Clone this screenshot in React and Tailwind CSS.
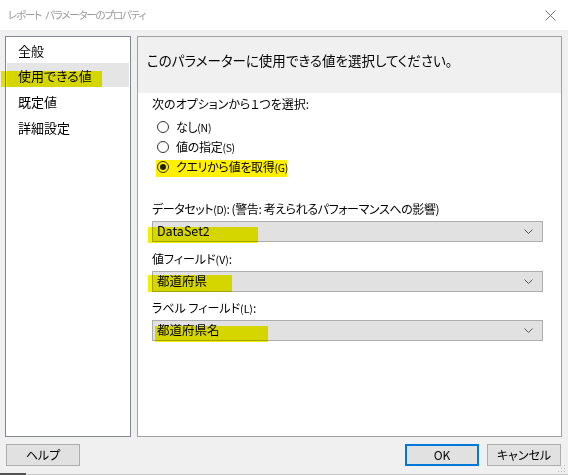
import React from "react";

function Chevron() {
  return (
    <svg width="9" height="5" viewBox="0 0 9 5" className="shrink-0">
      <path d="M0.5 0.5 L4.5 4.5 L8.5 0.5" fill="none" stroke="#555" strokeWidth="1" />
    </svg>
  );
}

function Combo({ value }) {
  return (
    <div className="h-[21px] border border-[#adadad] bg-[#e1e1e1] flex items-center justify-between pl-[4px] pr-[9px] text-[12.5px] text-black leading-none">
      <span>{value}</span>
      <Chevron />
    </div>
  );
}

function Radio({ checked, label, key2 }) {
  return (
    <div className="h-[20px] flex items-center text-[12px] text-black leading-none">
      <div className="w-[12px] h-[12px] ml-[5px] rounded-full border border-[#333] bg-white flex items-center justify-center">
        {checked && <div className="w-[6px] h-[6px] rounded-full bg-[#222]" />}
      </div>
      <span className="ml-[7px] tracking-[-0.3px]">
        {label}
        <span className="text-[10.5px]">({key2})</span>
      </span>
    </div>
  );
}

function Label({ children }) {
  return <div className="h-[20px] flex items-center text-[12px] text-black leading-none">{children}</div>;
}

export default function App() {
  return (
    <div className="relative w-[568px] h-[475px] bg-[#f0f0f0] overflow-hidden font-['Noto_Sans_CJK_JP','Noto_Sans',sans-serif] [font-feature-settings:'palt']">
      {/* title bar */}
      <div className="h-[30px] bg-white flex items-center justify-between pl-[8px] pr-[12px]">
        <span className="flex gap-[4px] text-[10.5px] tracking-[-1.2px] text-[#9a9a9a] leading-none">
          <span>レポート</span>
          <span>パラメーターのプロパティ</span>
        </span>
        <svg width="11" height="11" viewBox="0 0 11 11">
          <path d="M0.5 0.5 L10.5 10.5 M10.5 0.5 L0.5 10.5" stroke="#777" strokeWidth="1" fill="none" />
        </svg>
      </div>

      {/* body */}
      <div className="flex gap-[6px] pl-[5px] pr-[6px] pt-[6px]">
        <div className="w-[126px] h-[401px] border border-[#828790] bg-white flex flex-col text-[13px] text-black leading-none">
          <div className="h-[26px] flex items-center pl-[12px]">全般</div>
          <div className="h-[24px] mx-[1px] bg-[#e5e5e5] flex items-center pl-[11px]">使用できる値</div>
          <div className="h-[28px] flex items-center pl-[12px]">既定値</div>
          <div className="h-[24px] flex items-center pl-[12px]">詳細設定</div>
        </div>

        <div className="flex-1 h-[401px] border border-[#a0a0a0] bg-white flex flex-col">
          <div className="h-[56px] bg-[#f0f0f0] flex items-center pl-[9px] pb-[8px] text-[13.5px] text-black leading-none">
            このパラメーターに使用できる値を選択してください。
          </div>
          <div className="flex flex-col pl-[14px] pr-[18px] pt-[1px]">
            <Label>次のオプションから１つを選択:</Label>
            <div className="mt-[3px] flex flex-col">
              <Radio label="なし" key2="N" />
              <Radio label="値の指定" key2="S" />
              <Radio checked label="クエリから値を取得" key2="G" />
            </div>
            <div className="mt-[22px]">
              <Label>
                <span className="tracking-[-0.4px]">
                  データセット<span className="text-[10.5px]">(D)</span>: (警告: 考えられるパフォーマンスへの影響)
                </span>
              </Label>
            </div>
            <div className="mt-[2px]">
              <Combo value="DataSet2" />
            </div>
            <div className="mt-[7px]">
              <Label>
                <span>
                  値フィールド<span className="text-[10.5px]">(V)</span>:
                </span>
              </Label>
            </div>
            <div className="mt-[2px]">
              <Combo value="都道府県" />
            </div>
            <div className="mt-[6px]">
              <Label>
                <span>
                  ラベル フィールド<span className="text-[10.5px]">(L)</span>:
                </span>
              </Label>
            </div>
            <div className="mt-[2px]">
              <Combo value="都道府県名" />
            </div>
          </div>
        </div>
      </div>

      {/* buttons */}
      <div className="flex items-center justify-between pl-[6px] pr-[7px] mt-[7px]">
        <button className="w-[74px] h-[22px] border border-[#adadad] bg-[#e1e1e1] text-[12px] text-black leading-none">
          ヘルプ
        </button>
        <div className="flex gap-[8px]">
          <button className="w-[74px] h-[22px] border-2 border-[#0078d7] bg-[#e1e1e1] text-[12px] text-black leading-none">
            OK
          </button>
          <button className="w-[74px] h-[22px] border border-[#adadad] bg-[#e1e1e1] text-[12px] text-black leading-none">
            キャンセル
          </button>
        </div>
      </div>

      {/* bottom edge */}
      <div className="absolute left-0 right-0 bottom-0 h-[1px] bg-[#c8c8c8]" />
      <div className="absolute left-0 bottom-0 w-[26px] h-[2px] bg-[#555]" />
      <svg className="absolute right-[2px] bottom-[2px]" width="8" height="8" viewBox="0 0 8 8">
        <rect x="6" y="0" width="1" height="1" fill="#bbb" />
        <rect x="3" y="3" width="1" height="1" fill="#bbb" />
        <rect x="6" y="3" width="1" height="1" fill="#bbb" />
        <rect x="0" y="6" width="1" height="1" fill="#bbb" />
        <rect x="3" y="6" width="1" height="1" fill="#bbb" />
        <rect x="6" y="6" width="1" height="1" fill="#bbb" />
      </svg>

      {/* highlighter marks */}
      <div className="absolute left-[1px] top-[71px] w-[101px] h-[16px] bg-[#eeee00] mix-blend-multiply" />
      <div className="absolute left-[156px] top-[160px] w-[131px] h-[17px] bg-[#fff000] mix-blend-multiply" />
      <div className="absolute left-[148px] top-[227px] w-[110px] h-[16px] bg-[#f2f200] mix-blend-multiply" />
      <div className="absolute left-[148px] top-[275px] w-[84px] h-[17px] bg-[#f2f200] mix-blend-multiply" />
      <div className="absolute left-[155px] top-[326px] w-[113px] h-[16px] bg-[#f2f200] mix-blend-multiply" />
    </div>
  );
}
